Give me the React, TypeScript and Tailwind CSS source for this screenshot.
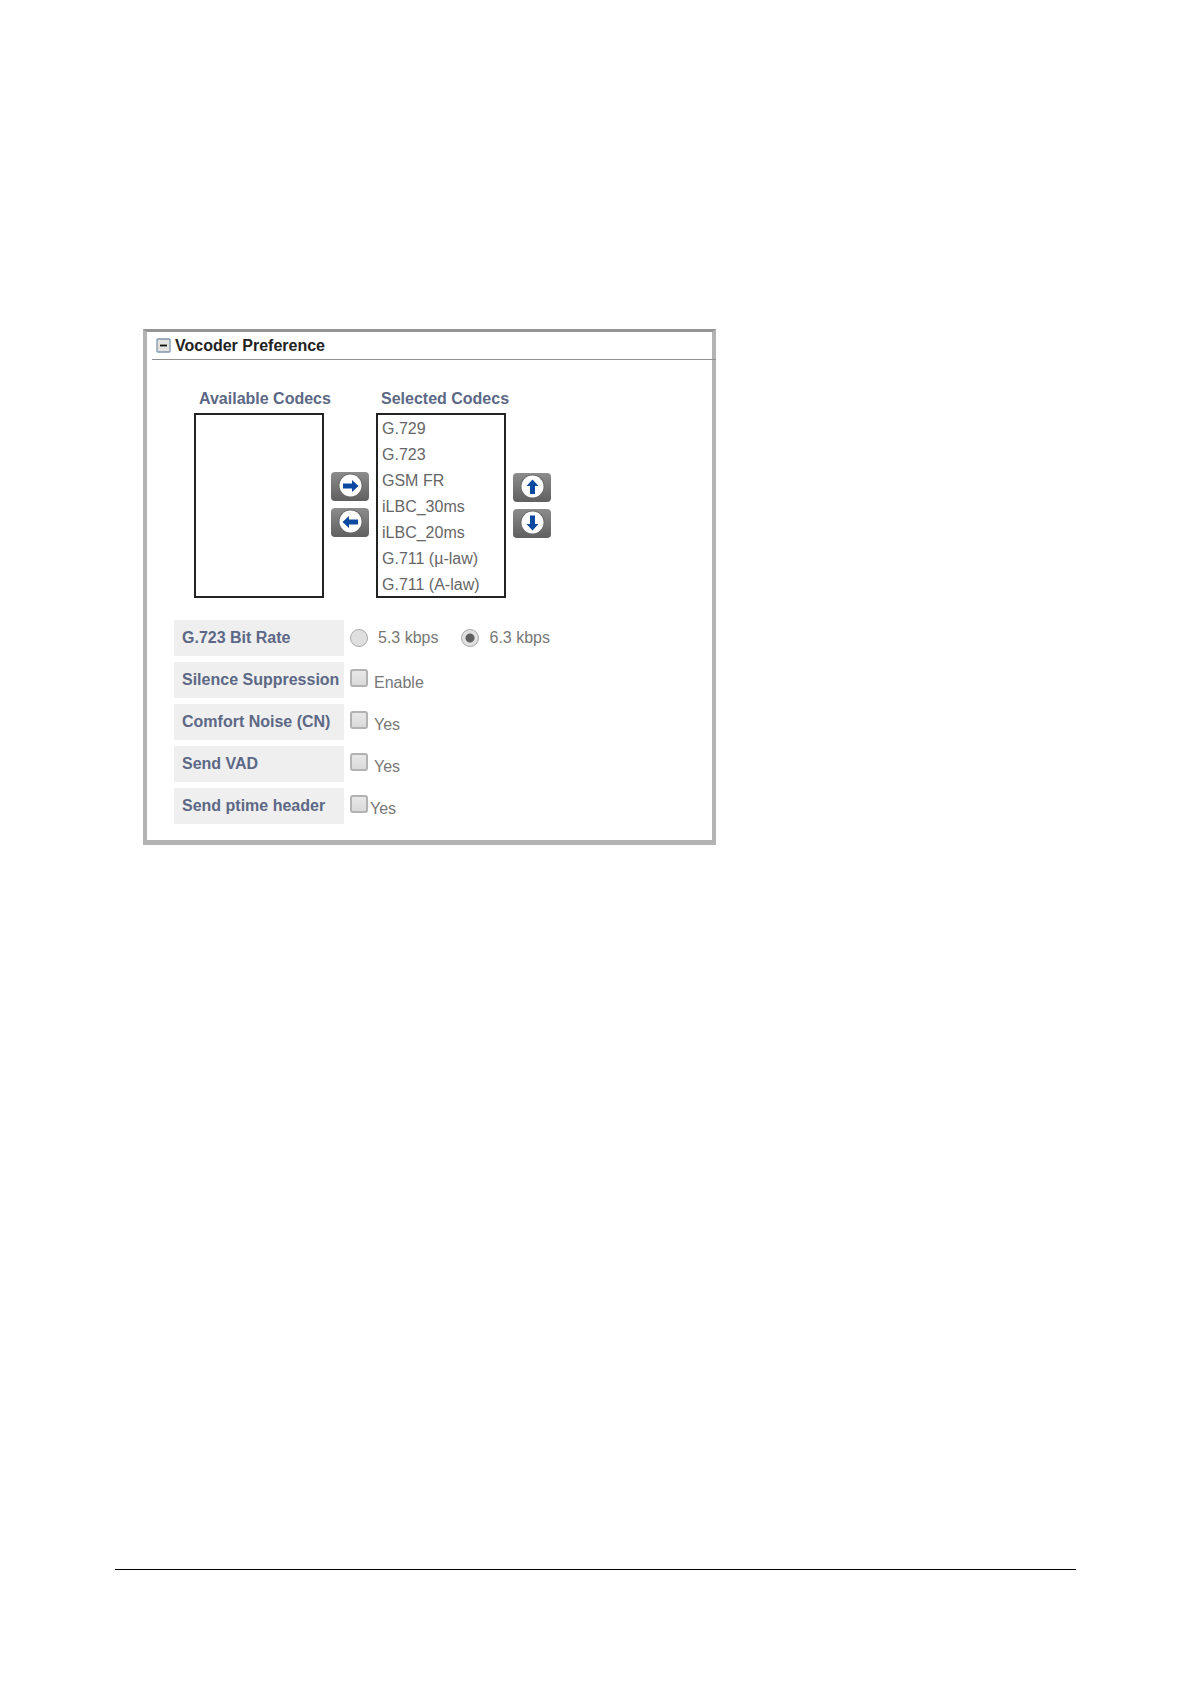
import { useState } from "react";
import type { ReactNode } from "react";

const selectedCodecs = [
  "G.729",
  "G.723",
  "GSM FR",
  "iLBC_30ms",
  "iLBC_20ms",
  "G.711 (µ-law)",
  "G.711 (A-law)",
];

type Direction = "right" | "left" | "up" | "down";

const arrows: Record<Direction, string> = {
  right: "M12 11.5h9V8l6.5 6-6.5 6v-3.5h-9z",
  left: "M27 11.5h-9V8l-6.5 6 6.5 6v-3.5h9z",
  up: "M17 21v-8h-3.5l6-6.5 6 6.5H22v8z",
  down: "M17 6.500v8.500h-3.500l6 6.500 6-6.500H22V6.500z",
};

function MoveButton({ direction, label }: { direction: Direction; label: string }) {
  return (
    <button
      type="button"
      aria-label={label}
      className="block h-[29px] w-[38px] overflow-hidden rounded bg-linear-to-b from-[#8c8c8c] to-[#606060]"
    >
      <svg viewBox="0 0 38 29" className="block h-full w-full">
        <circle cx="19.5" cy="13.5" r="12" fill="#6a6a6a" />
        <circle cx="19.5" cy="13.5" r="11" fill="#fff" />
        <path d={arrows[direction]} fill="#0b48a0" />
      </svg>
    </button>
  );
}

function CodecList({ id, title, codecs }: { id: string; title: string; codecs: string[] }) {
  return (
    <div className="w-[130px]">
      <label htmlFor={id} className="block pl-[5px] pb-0.5 font-bold leading-6 whitespace-nowrap text-[#5c6885]">
        {title}
      </label>
      <select
        id={id}
        multiple
        className="block h-[185px] w-full overflow-hidden border-2 border-[#222] bg-white pl-1 text-[#666]"
      >
        {codecs.map((codec) => (
          <option key={codec} className="h-[26px] p-0 pt-[5px]">
            {codec}
          </option>
        ))}
      </select>
    </div>
  );
}

function SettingRow({ title, children }: { title: string; children: ReactNode }) {
  return (
    <div className="flex h-9 gap-1.5">
      <div className="flex w-[170px] items-center bg-[#efefef] pl-2 font-bold whitespace-nowrap text-[#5c6885]">
        {title}
      </div>
      {children}
    </div>
  );
}

function CheckOption({ label, tight }: { label: string; tight?: boolean }) {
  return (
    <label className={`flex items-start pt-[7px] leading-7 text-[#777] ${tight ? "gap-0.5" : "gap-1.5"}`}>
      <input
        type="checkbox"
        className="size-[18px] appearance-none rounded-[3px] border-2 border-[#b2b2b2] bg-linear-to-b from-[#e8e8e8] to-[#dadada] checked:bg-gray-500"
      />
      {label}
    </label>
  );
}

function RadioOption({ label, checked, onChange }: { label: string; checked: boolean; onChange: () => void }) {
  return (
    <label className="flex items-center gap-2.5 text-[#777]">
      <input
        type="radio"
        name="bitrate"
        checked={checked}
        onChange={onChange}
        className="size-[18px] appearance-none rounded-full border border-[#aaa] bg-[#dfdfdf] checked:bg-[radial-gradient(circle,#606060_4px,#e0e0e0_5px)]"
      />
      {label}
    </label>
  );
}

export default function App() {
  const [rate, setRate] = useState("6.3 kbps");

  return (
    <div className="flex min-h-screen flex-col bg-white pt-[329px] pr-[114px] pb-[114px] pl-[115px] font-['Liberation_Sans',Arial,sans-serif] text-base">
      <main className="ml-7 w-full max-w-[573px] border-4 border-t-[3px] border-b-[5px] border-[#b3b3b3] border-t-[#949494] pb-4">
        <header className="relative -mr-1 ml-[5px] flex h-7 items-center gap-1 border-b border-[#8f8f8f] pl-1">
          <button type="button" aria-label="Collapse Vocoder Preference">
            <svg viewBox="0 0 15 15" className="block size-[15px]">
              <rect x="1" y="1" width="13" height="13" rx="1" fill="#e3e3df" stroke="#8097b0" strokeWidth="1.3" />
              <path d="M4 7.5h7" stroke="#111" strokeWidth="1.8" />
            </svg>
          </button>
          <h1 className="font-bold text-[#222]">Vocoder Preference</h1>
        </header>

        <section className="flex pt-[27px] pl-[47px]">
          <CodecList id="available" title="Available Codecs" codecs={[]} />
          <div className="flex flex-col gap-[7px] px-[7px] pt-[85px]">
            <MoveButton direction="right" label="Add codec" />
            <MoveButton direction="left" label="Remove codec" />
          </div>
          <CodecList id="selected" title="Selected Codecs" codecs={selectedCodecs} />
          <div className="flex flex-col gap-[7px] px-[7px] pt-[86px]">
            <MoveButton direction="up" label="Move up" />
            <MoveButton direction="down" label="Move down" />
          </div>
        </section>

        <section className="flex flex-col gap-1.5 pt-[22px] pl-[27px]">
          <SettingRow title="G.723 Bit Rate">
            <div className="flex gap-[23px]">
              {["5.3 kbps", "6.3 kbps"].map((value) => (
                <RadioOption key={value} label={value} checked={rate === value} onChange={() => setRate(value)} />
              ))}
            </div>
          </SettingRow>
          <SettingRow title="Silence Suppression">
            <CheckOption label="Enable" />
          </SettingRow>
          <SettingRow title="Comfort Noise (CN)">
            <CheckOption label="Yes" />
          </SettingRow>
          <SettingRow title="Send VAD">
            <CheckOption label="Yes" />
          </SettingRow>
          <SettingRow title="Send ptime header">
            <CheckOption label="Yes" tight />
          </SettingRow>
        </section>
      </main>

      <footer className="mt-auto border-t border-black" />
    </div>
  );
}
